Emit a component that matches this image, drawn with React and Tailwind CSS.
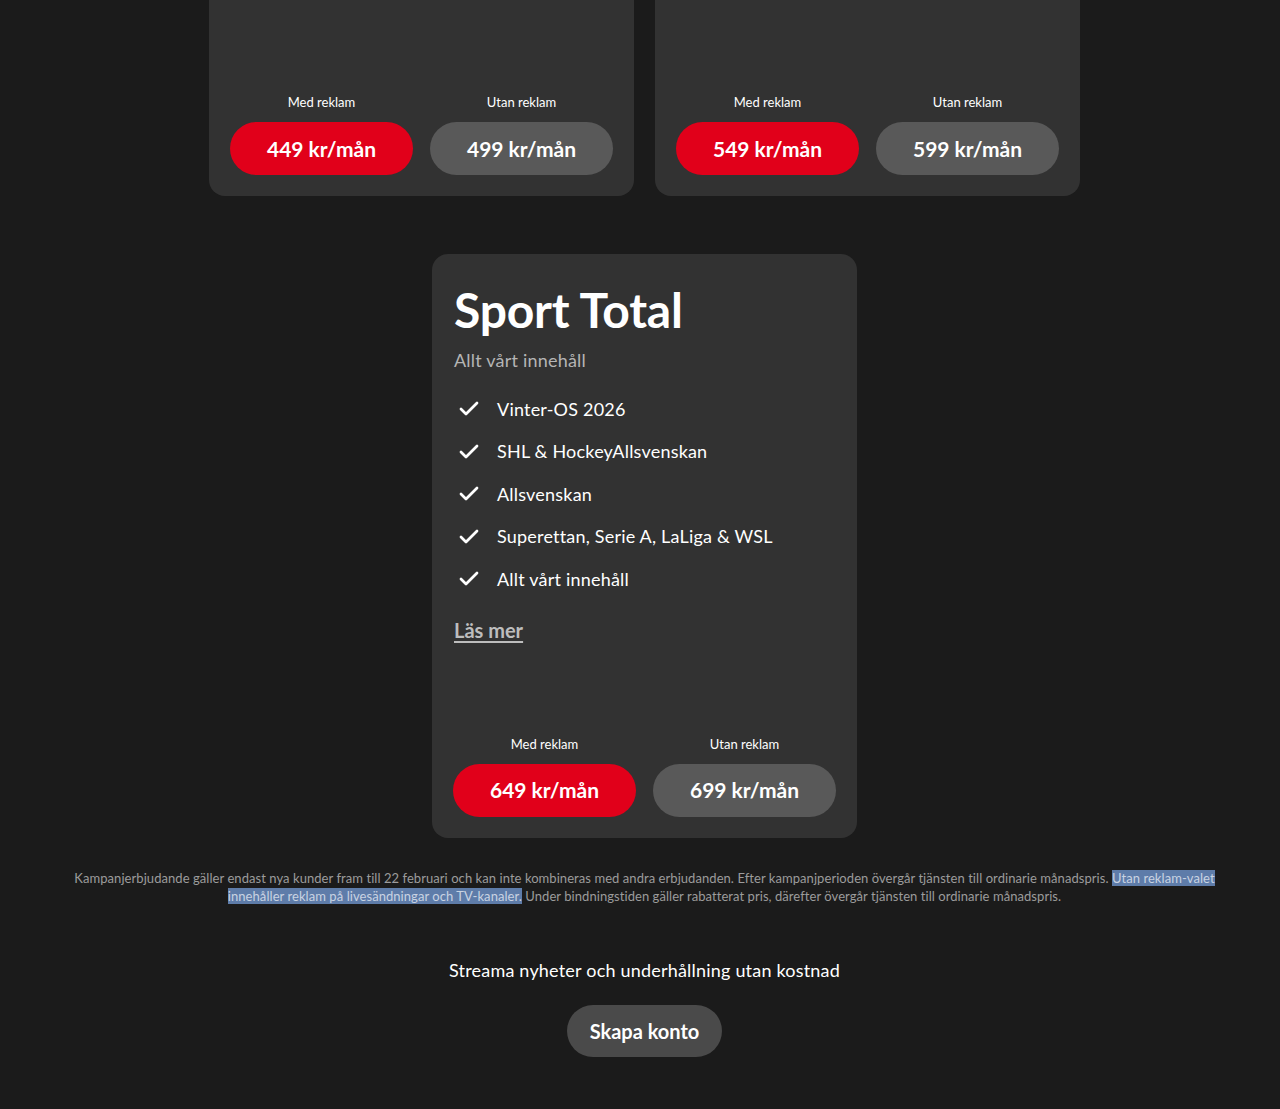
import { Check } from "lucide-react";

const font = { fontFamily: "Lato, 'Noto Sans', sans-serif" };

function PriceRow({ withAds, withoutAds }) {
  return (
    <div className="grid grid-cols-2 gap-[17px]">
      <div className="flex flex-col items-center">
        <span className="text-[13px] text-white leading-none mb-[13px]">Med reklam</span>
        <button className="w-full h-[53px] rounded-full bg-[#e1001a] text-white text-[21px] font-bold">
          {withAds} kr/mån
        </button>
      </div>
      <div className="flex flex-col items-center">
        <span className="text-[13px] text-white leading-none mb-[13px]">Utan reklam</span>
        <button className="w-full h-[53px] rounded-full bg-[#595959] text-white text-[21px] font-bold">
          {withoutAds} kr/mån
        </button>
      </div>
    </div>
  );
}

const features = [
  "Vinter-OS 2026",
  "SHL & HockeyAllsvenskan",
  "Allsvenskan",
  "Superettan, Serie A, LaLiga & WSL",
  "Allt vårt innehåll",
];

export default function App() {
  return (
    <div className="min-h-[1109px] bg-[#1b1b1b] text-white pl-[9px]" style={font}>
      <div className="w-[871px] mx-auto grid grid-cols-2 gap-[21px]">
        <div className="h-[196px] bg-[#323232] rounded-b-2xl px-[21px] pb-[21px] flex flex-col justify-end">
          <PriceRow withAds="449" withoutAds="499" />
        </div>
        <div className="h-[196px] bg-[#323232] rounded-b-2xl px-[21px] pb-[21px] flex flex-col justify-end">
          <PriceRow withAds="549" withoutAds="599" />
        </div>
      </div>

      <div className="mt-[58px] w-[425px] mx-auto bg-[#323232] rounded-2xl px-[21px] pt-[28px] pb-[21px]">
        <h2 className="text-[48px] font-bold leading-[56px] ml-px tracking-[-0.2px]">Sport Total</h2>
        <p className="mt-[10px] text-[18px] text-[#b5b5b5] leading-6 ml-px tracking-[0.2px]">Allt vårt innehåll</p>
        <ul className="mt-[16px] flex flex-col">
          {features.map((f) => (
            <li key={f} className="flex items-center h-[42.5px] text-[18px] tracking-[0.2px]">
              <Check className="w-[24px] h-[24px] ml-[4px] mr-[16px]" strokeWidth={2.75} />
              {f}
            </li>
          ))}
        </ul>
        <a href="#" className="inline-block mt-[14px] ml-px text-[20px] font-bold text-[#bdbdbd] underline underline-offset-[3px]">
          Läs mer
        </a>
        <div className="mt-[93px]">
          <PriceRow withAds="649" withoutAds="699" />
        </div>
      </div>

      <p className="mt-[31px] mx-auto w-[1160px] text-center text-[13px] leading-[18px] text-[#9c9c9c] tracking-[0.06px]">
        Kampanjerbjudande gäller endast nya kunder fram till 22 februari och kan inte kombineras med andra erbjudanden. Efter kampanjperioden övergår tjänsten till ordinarie månadspris.{" "}
        <span className="bg-[#5e7ca9] text-[#c9d3e2]">Utan reklam-valet innehåller reklam på livesändningar och TV-kanaler.</span>{" "}
        Under bindningstiden gäller rabatterat pris, därefter övergår tjänsten till ordinarie månadspris.
      </p>

      <div className="mt-[53px] flex flex-col items-center">
        <p className="text-[18px] leading-6 tracking-[0.2px]">Streama nyheter och underhållning utan kostnad</p>
        <button className="mt-[23px] h-[52px] px-[23px] rounded-full bg-[#4a4a4a] text-[20px] font-bold">
          Skapa konto
        </button>
      </div>
    </div>
  );
}
